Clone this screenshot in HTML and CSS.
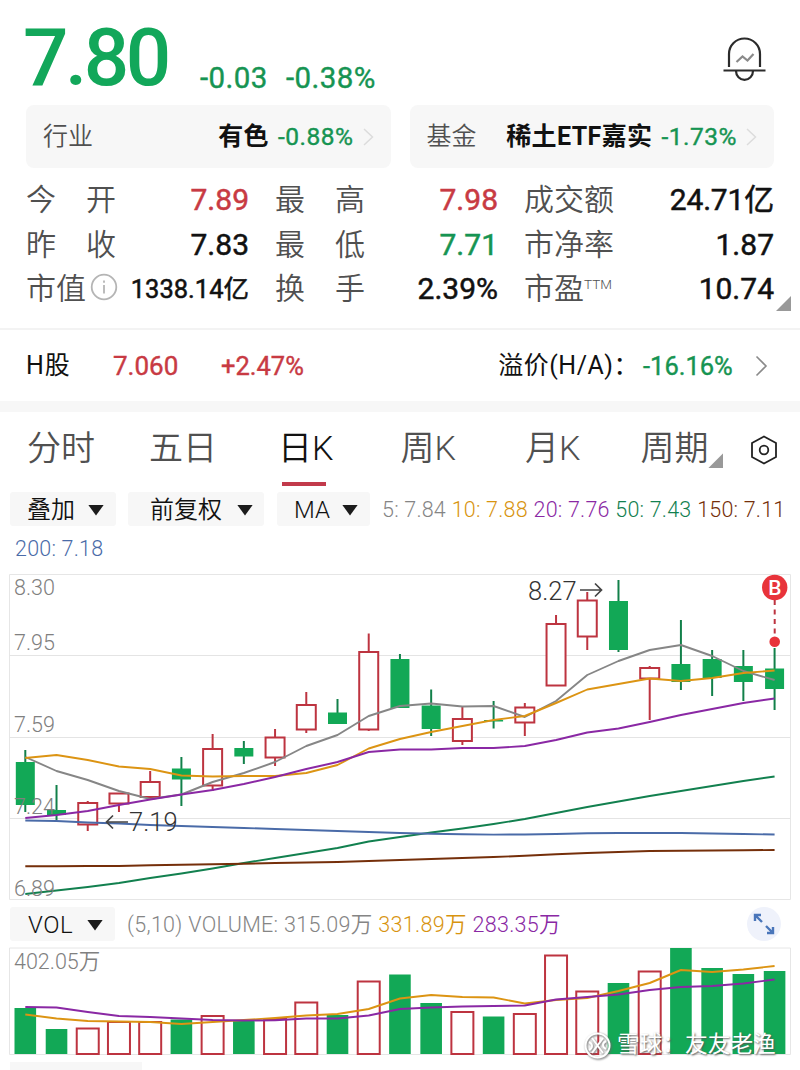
FILE: index.html
```html
<!DOCTYPE html>
<html lang="zh-CN">
<head>
  <meta charset="UTF-8" />
  <meta name="viewport" content="width=device-width, initial-scale=1.0"/>
  <title>日K</title>
  <link rel="stylesheet" href="styles.css">
</head>
<body>

<header class="quote">
  <span class="price">7.80</span>
  <span class="change">-0.03</span>
  <span class="change">-0.38%</span>
  <svg class="bell" width="44" height="46" viewBox="0 0 44 46" fill="none" stroke="#2b2b2b" stroke-width="2.2">
    <path d="M7 31V18a15.500 15.500 0 0 1 31 0v13"/>
    <path d="M1.500 34.500h42M14 35a8.500 8.800 0 0 0 17 0"/>
    <path d="M14.500 26l6-5.500 5 4 6-6.500" stroke="#8a8a8a"/>
  </svg>
</header>

<div class="boards">
  <div class="board">
    <span class="board-label">行业</span>
    <b>有色</b><span class="board-value down">-0.88%</span>
    <svg width="11" height="18" viewBox="0 0 11 18" fill="none" stroke="#dcdcdc" stroke-width="1.500"><path d="M1 1l8.500 8L1 17"/></svg>
  </div>
  <div class="board">
    <span class="board-label">基金</span>
    <b>稀土ETF嘉实</b><span class="board-value down">-1.73%</span>
    <svg width="11" height="18" viewBox="0 0 11 18" fill="none" stroke="#dcdcdc" stroke-width="1.500"><path d="M1 1l8.500 8L1 17"/></svg>
  </div>
</div>

<section class="stats">
  <div class="stat"><span class="wide">今开</span><em class="up">7.89</em></div>
  <div class="stat"><span class="wide">最高</span><em class="up">7.98</em></div>
  <div class="stat"><span>成交额</span><em class="amount">24.71亿</em></div>
  <div class="stat"><span class="wide">昨收</span><em>7.83</em></div>
  <div class="stat"><span class="wide">最低</span><em class="down">7.71</em></div>
  <div class="stat"><span>市净率</span><em>1.87</em></div>
  <div class="stat">
    <span>市值</span>
    <svg class="info" width="28" height="28" viewBox="0 0 28 28" fill="none" stroke="#b5b5b5" stroke-width="1.800"><circle cx="14" cy="14" r="12.300"/><path d="M14 12v8.500M14 7.500v2.200"/></svg>
    <em class="small">1338.14亿</em>
  </div>
  <div class="stat"><span class="wide">换手</span><em>2.39%</em></div>
  <div class="stat"><span>市盈<sup>TTM</sup></span><em>10.74</em></div>
  <i class="corner"></i>
</section>

<div class="hshare">
  <span class="h-name">H股</span>
  <span class="h-price up">7.060</span>
  <span class="h-percent up">+2.47%</span>
  <span class="premium">溢价(H/A)：</span>
  <span class="premium-value down">-16.16%</span>
  <svg width="13" height="22" viewBox="0 0 13 22" fill="none" stroke="#8a8a8a" stroke-width="1.600"><path d="M1.500 1.500L11 11l-9.500 9.500"/></svg>
</div>

<nav class="tabs">
  <a>分时</a>
  <a>五日</a>
  <a class="active">日K</a>
  <a>周K</a>
  <a>月K</a>
  <a>周期</a>
  <i class="corner"></i>
  <svg width="28" height="30" viewBox="0 0 28 30" fill="none" stroke="#222" stroke-width="1.800">
    <path d="M14 1.500L26 8v14L14 28.500 2 22V8z"/><circle cx="14" cy="15" r="4.300"/>
  </svg>
</nav>

<div class="legend">
  <button class="pill overlay">叠加<i></i></button>
  <button class="pill adjust">前复权<i></i></button>
  <button class="pill ma">MA<i></i></button>
  <span class="ma5">5: 7.84</span>
  <span class="ma10">10: 7.88</span>
  <span class="ma20">20: 7.76</span>
  <span class="ma50">50: 7.43</span>
  <span class="ma150">150: 7.11</span>
</div>
<div class="legend second"><span class="ma200">200: 7.18</span></div>

<svg id="kline" class="chart" width="800" height="330" viewBox="0 572 800 330"></svg>

<div class="legend volume">
  <button class="pill vol">VOL<i></i></button>
  <span class="vol-now">(5,10) VOLUME: 315.09万</span>
  <span class="ma10">331.89万</span>
  <span class="ma20">283.35万</span>
  <svg class="expand" width="34" height="34" viewBox="0 0 34 34" fill="none" stroke="#4a76ba" stroke-width="2.400">
    <circle cx="17" cy="17" r="17" fill="#eff2fb" stroke="none"/>
    <path d="M8 14V8h6M8.500 8.500l6.500 6.500M19 19l6.500 6.500M26 20v6h-6"/>
  </svg>
</div>

<svg id="volume" class="chart" width="800" height="110" viewBox="0 946 800 110"></svg>

<div class="next"></div>

<div class="watermark">
  <svg width="27" height="27" viewBox="0 0 27 27" fill="none" stroke="#fff" stroke-width="2">
    <circle cx="13.500" cy="13.500" r="12"/>
    <path d="M8 6l11 15M19 6L8 21M5 10c4 2 4 6 0 8M22 9c-4 2-4 6 0 8"/>
  </svg>
  雪球：友友老渔
</div>

<script>
const RED = '#bd3440', GREEN = '#12a856';
const x = i => 25.3 + i * 31.22;

// type, high, body top, body bottom, low, volume top
const days = [
  ['g', 750, 762, 805, 812, 1008],
  ['g', 785, 810, 815, 820, 1029],
  ['r', 801, 803, 824.5, 831, 1028],
  ['r', 793, 793.5, 803.5, 812, 1021.5],
  ['r', 771, 782, 797, 799, 1021.5],
  ['g', 757, 768.5, 779.5, 806, 1019.5],
  ['r', 734, 749, 785.5, 791, 1015.5],
  ['g', 741, 748, 756.5, 764, 1020.5],
  ['r', 729, 737.5, 757.5, 766, 1018.5],
  ['r', 692, 705, 729.5, 733, 1002],
  ['g', 699, 712.5, 724, 724, 1015],
  ['r', 633.5, 652, 729.5, 731, 981],
  ['g', 654, 659, 708, 708, 974.5],
  ['g', 689.5, 705.5, 729, 736, 1003],
  ['r', 707, 719, 741, 745, 1011.5],
  ['g', 701, 720, 721.5, 728.5, 1016.5],
  ['r', 703, 707.5, 722.5, 736, 1013.5],
  ['r', 615, 624, 685.5, 685.5, 955],
  ['r', 592, 600.5, 636.5, 650, 991],
  ['g', 580, 601, 650, 652, 983],
  ['r', 666, 668, 678.5, 720, 971],
  ['g', 620, 664, 682, 690, 948],
  ['g', 650, 659, 678, 696, 968],
  ['g', 650, 666, 682, 701, 974],
  ['g', 648, 668.5, 689, 710, 971]
];

const priceLines = {
  '#12804f': [894, 890.5, 887, 883, 878, 873.5, 868.5, 863, 858, 853, 848, 841.5, 837, 832.5, 828.5, 824, 819, 813, 807, 801.5, 796, 791, 786, 781, 776.5],
  '#4a6ba8': [820.5, 821, 822.5, 823.5, 825, 826, 827, 828, 829, 830, 831, 832, 833, 833.7, 834.3, 834.6, 834.5, 834, 833.3, 833, 833, 833, 833.5, 834, 834.5],
  '#752f0a': [866.3, 866.3, 866, 866, 865.3, 864.8, 864.3, 863.7, 863, 862.5, 862, 861, 860, 859, 858, 857, 855.8, 854.3, 853, 852, 851, 850.7, 850.5, 850.2, 850],
  '#868686': [757, 771, 780, 791, 799, 794.5, 782, 773, 762, 746, 735, 716, 706, 703.5, 706.5, 706, 717, 701, 675, 661, 650, 645, 656, 671, 680],
  '#dc9413': [758, 755, 760, 766.5, 769, 775.5, 776.5, 776, 776, 773, 765, 748.5, 739, 732, 726, 720, 716, 703, 689.5, 684, 678.5, 681, 678, 673, 670.5],
  '#8a28a4': [818, 815, 811, 805, 799.5, 794.5, 790, 784, 777, 769, 762, 752, 749.5, 749.5, 748, 748, 746, 740, 732.5, 728.5, 722, 715, 709, 703, 698.5]
};
const volumeLines = {
  '#dc9413': [1014.5, 1018.5, 1021, 1021.5, 1022, 1024, 1022, 1020, 1018, 1015.5, 1014, 1009, 998.5, 995, 997, 997.5, 1003.5, 1000, 998, 991, 983, 970, 972, 969.5, 966],
  '#8a28a4': [1007, 1007.5, 1012, 1016, 1017, 1018.5, 1020, 1020.5, 1020.3, 1018.5, 1018.5, 1015.5, 1009, 1007.5, 1006.5, 1006, 1005.5, 999.5, 997, 994.5, 990, 987, 986, 983.5, 979.5]
};

function gridLine(y) {
  return `<path d="M9.5 ${y}H790.5" stroke="#e4e4e4"/>`;
}
function frame(top, bottom) {
  return `<path d="M9.5 ${top}H790.5V${bottom}H9.5z" fill="none" stroke="#e6e6e6"/>`;
}
function box(type, cx, top, bottom, half) {
  if (type === 'g') {
    return `<rect x="${cx - half}" y="${top}" width="${half * 2}" height="${bottom - top}" fill="${GREEN}"/>`;
  }
  return `<rect x="${cx - half}" y="${top}" width="${half * 2}" height="${bottom - top}" fill="#fff" stroke="${RED}" stroke-width="2"/>`;
}
function lines(set) {
  return Object.entries(set).map(([color, ys]) =>
    `<polyline points="${ys.map((y, i) => x(i) + ',' + y).join(' ')}" fill="none" stroke="${color}" stroke-width="1.900" stroke-linejoin="round"/>`
  ).join('');
}
function label(y, text, cls = 'axis', lx = 14) {
  return `<text class="${cls}" x="${lx}" y="${y}">${text}</text>`;
}

let k = frame(574.5, 899.5) + [655.5, 737.5, 818.5].map(gridLine).join('');
days.forEach(([type, high, top, bottom, low], i) => {
  k += `<path d="M${x(i)} ${high}V${low}" stroke="${type === 'g' ? '#12804a' : RED}" stroke-width="2"/>`;
  k += box(type, x(i), top, bottom, 9.5);
});
k += lines(priceLines);
k += label(595, '8.30') + label(650, '7.95') + label(732, '7.59') + label(814, '7.24') + label(896, '6.89');
k += label(831, '7.19', 'mark', 129) + label(599.5, '8.27', 'mark', 528);
k += '<path class="arrow" d="M128 822H106.500M113 815.500l-6.500 6.500 6.500 6.500M580 590H601.500M595 583.500l6.500 6.500-6.500 6.500"/>';
// buy marker
k += `<path d="M774.700 600V637" stroke="${RED}" stroke-width="2" stroke-dasharray="5 4.500"/>
  <circle cx="774.700" cy="587.500" r="12.700" fill="#e8333a"/>
  <circle cx="774.700" cy="641.800" r="5.300" fill="#e8333a"/>
  <text class="buy" x="774.900" y="595" text-anchor="middle">B</text>`;
document.getElementById('kline').innerHTML = k;

let v = frame(948, 1054.5);
days.forEach(([type, , , , , top], i) => {
  v += box(type, x(i), top + (type === 'r' ? .5 : 0), 1054, type === 'r' ? 11 : 10.8);
});
v += lines(volumeLines) + label(969, '402.05万');
document.getElementById('volume').innerHTML = v;
</script>

</body>
</html>
```
FILE: styles.css
```css
:root {
  --up: #c83a43;
  --down: #169452;
  --text: #111;
  --label: #505050;
  --soft: #f7f7f7;
}
* {
  box-sizing: border-box;
}
body {
  margin: 0;
  width: 800px;
  height: 1070px;
  overflow: hidden;
  position: relative;
  background: #fff;
  color: var(--text);
  font-family: Roboto, "Noto Sans CJK SC", sans-serif;
  white-space: nowrap;
}
svg {
  display: block;
  flex: none;
}
.up {
  color: var(--up);
}
.down {
  color: var(--down);
}

.quote {
  height: 105px;
  padding: 0 34px 0 23px;
  display: flex;
  align-items: flex-start;
  color: #12a75a;
}
.price {
  width: 177px;
  font-size: 80px;
  font-weight: 500;
  line-height: 116px;
  letter-spacing: -3.500px;
}
.change {
  width: 86px;
  color: var(--down);
  font-size: 29.500px;
  line-height: 45px;
  margin-top: 56px;
  letter-spacing: 0.4px;
  -webkit-text-stroke: 0.4px;
}
.bell {
  margin: 36px 0 0 auto;
}

.boards {
  display: flex;
  gap: 19px;
  padding: 0 26px;
}
.board {
  width: 365px;
  height: 63px;
  display: flex;
  align-items: center;
  padding: 0 17px;
  background: var(--soft);
  border-radius: 8px;
  font-size: 25px;
  line-height: 62px;
}
.board b {
  letter-spacing: 0.4px;
}
.board-label {
  margin-right: auto;
  color: var(--label);
  font-weight: 350;
}
.board-value {
  margin: 0 9px 0 9px;
  font-size: 24.500px;
  letter-spacing: 0.5px;
  -webkit-text-stroke: 0.4px;
}

.stats {
  position: relative;
  display: grid;
  grid-template-columns: 222px 222px 249px;
  grid-auto-rows: 44.5px;
  column-gap: 27px;
  height: 162px;
  padding: 10px 26px 0;
  border-bottom: 2px solid #f3f3f3;
}
.stat {
  display: flex;
  align-items: center;
  color: var(--label);
  font-size: 30px;
  font-weight: 350;
  line-height: 44px;
}
.stat em {
  margin-left: auto;
  margin-right: -1px;
  font-style: normal;
  font-size: 30px;
  font-weight: 400;
  color: #111;
  -webkit-text-stroke: 0.5px;
}
.stat em.up {
  color: var(--up);
}
.stat em.down {
  color: var(--down);
}
.stat em.small {
  font-size: 25.500px;
}
.stat em.amount {
  letter-spacing: -0.2px;
}
.wide {
  letter-spacing: 30px;
}
.stat sup {
  font-size: 13.500px;
  line-height: 0;
  vertical-align: 10px;
}
.info {
  margin: 0 0 5px 4px;
}
.corner {
  width: 15px;
  height: 15px;
  background: #999;
  clip-path: polygon(100% 0, 100% 100%, 0 100%);
}
.stats .corner {
  position: absolute;
  right: 9px;
  bottom: 17px;
}

.hshare {
  height: 82px;
  display: flex;
  align-items: center;
  padding: 0 32px 0 26px;
  border-bottom: 11px solid var(--soft);
  font-size: 25px;
  line-height: 68px;
}
.h-name {
  width: 87px;
  letter-spacing: 0.8px;
}
.h-price {
  width: 108px;
  font-size: 26px;
  -webkit-text-stroke: 0.4px;
}
.h-percent {
  font-size: 25.500px;
  -webkit-text-stroke: 0.4px;
}
.premium {
  margin: 0 4px 0 auto;
  letter-spacing: 0.5px;
}
.premium-value {
  width: 112px;
  font-size: 25.500px;
  -webkit-text-stroke: 0.4px;
}

.tabs {
  height: 79px;
  display: flex;
  padding: 0 22px 0 27px;
  font-size: 34px;
  font-weight: 350;
  line-height: 73px;
  color: var(--label);
}
.tabs a {
  margin-right: 54px;
}
.tabs a:nth-of-type(2) {
  margin-right: 61px;
}
.tabs a:nth-of-type(3) {
  margin-right: 67px;
}
.tabs a:nth-of-type(4) {
  margin-right: 69px;
}
.tabs a:nth-of-type(5) {
  margin-right: 60px;
}
.tabs a:nth-of-type(6) {
  margin-right: 0;
}
.tabs .active {
  color: #111;
}
.tabs .active::after {
  content: "";
  display: block;
  width: 44px;
  height: 4px;
  margin: -3px 0 0 4px;
  background: #c23a4b;
}
.tabs .corner {
  margin: 41px 0 0 0;
}
.tabs svg {
  margin: 23px 0 0 auto;
}

.legend {
  height: 36px;
  display: flex;
  align-items: center;
  padding-left: 10px;
  font-size: 21.500px;
  line-height: 36px;
  font-weight: 350;
}
.legend span {
  margin-right: 5.700px;
  padding-top: 2px;
  letter-spacing: 0.2px;
}
.pill {
  height: 34px;
  padding: 0;
  display: flex;
  align-items: center;
  flex: none;
  border: none;
  border-radius: 3px;
  background: var(--soft);
  color: #111;
  font: 350 24px/34px Roboto, "Noto Sans CJK SC", sans-serif;
}
.pill i {
  width: 16px;
  height: 11px;
  margin-left: auto;
  background: #1c1c1c;
  clip-path: polygon(0 0, 100% 0, 50% 100%);
}
.overlay {
  width: 106px;
  padding: 2px 12px 0 17px;
  margin-right: 12px;
}
.adjust {
  width: 136px;
  padding: 2px 11px 0 22px;
  margin-right: 13px;
}
.ma {
  width: 93px;
  padding: 2px 12px 0 17px;
  margin-right: 12px;
}
.second {
  padding: 0 0 3px 15px;
  height: 45px;
}
.ma5, .vol-now {
  color: #858585;
}
.ma10 {
  color: #d8940f;
}
.ma20 {
  color: #8a28a4;
}
.ma50 {
  color: #12804f;
}
.ma150 {
  color: #752f0a;
}
.ma200 {
  color: #4a6ba8;
}

.axis {
  font-size: 21.500px;
  font-weight: 350;
  fill: #808080;
}
.mark {
  font-size: 25.500px;
  font-weight: 350;
  fill: #333;
}
.arrow {
  fill: none;
  stroke: #444;
  stroke-width: 1.700;
}
.buy {
  font-size: 21px;
  font-weight: 500;
  fill: #fff;
}

.volume {
  height: 44px;
}
.volume span {
  letter-spacing: 0.32px;
}
.vol {
  width: 105px;
  padding: 2px 12px 0 18px;
  margin-right: 12px;
  letter-spacing: 0.5px;
}
.expand {
  margin: 0 19px 0 auto;
}
.next {
  width: 132px;
  height: 20px;
  margin: 6px 0 0 10px;
  background: var(--soft);
}
.watermark {
  position: absolute;
  left: 584px;
  top: 1031px;
  display: flex;
  align-items: center;
  gap: 6px;
  color: #fff;
  font-size: 22.700px;
  line-height: 28px;
  text-shadow: 1px 1px 2px #555;
}
.watermark svg {
  filter: drop-shadow(1px 1px 1px #666);
}
```
